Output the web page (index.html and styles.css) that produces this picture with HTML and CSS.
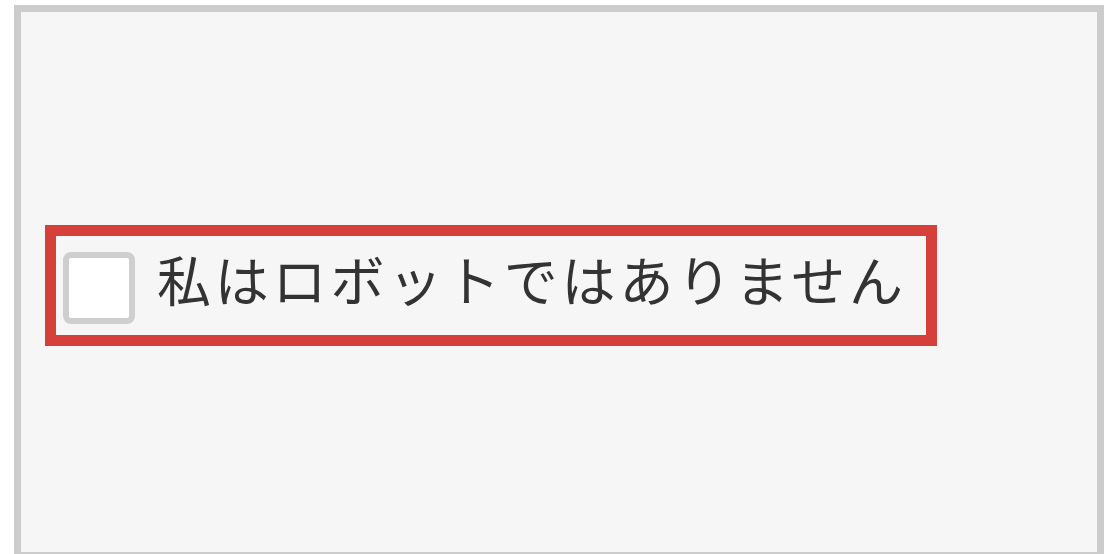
FILE: index.html
```html
<!DOCTYPE html>
<html lang="ja">
<head>
<meta charset="utf-8">
<link rel="stylesheet" href="styles.css">
</head>
<body>
<div class="frame">
  <label class="captcha">
    <span class="box"></span>
    <span class="label">私はロボットではありません</span>
  </label>
</div>
</body>
</html>
```

FILE: styles.css
```css
html, body {
  margin: 0;
  padding: 0;
  background: #ffffff;
  overflow: hidden;
}
.frame {
  box-sizing: border-box;
  margin: 5px 0 0 14px;
  width: 1090px;
  height: 554px;
  border: 7px solid #cccccc;
  background: #f6f6f6;
  padding: 213px 0 0 24px;
}
.captcha {
  box-sizing: border-box;
  display: flex;
  align-items: center;
  width: 892px;
  height: 121px;
  border: 11px solid #d6403a;
  padding: 5px 0 0 7px;
}
.box {
  box-sizing: border-box;
  flex: none;
  width: 72px;
  height: 72px;
  border: 6px solid #cfcfcf;
  border-radius: 8px;
  background: #ffffff;
}
.label {
  margin-left: 22px;
  margin-top: -19px;
  font-family: "Noto Sans CJK JP", "Noto Sans", sans-serif;
  font-size: 54px;
  letter-spacing: 3.8px;
  color: #333333;
  white-space: nowrap;
}
```
